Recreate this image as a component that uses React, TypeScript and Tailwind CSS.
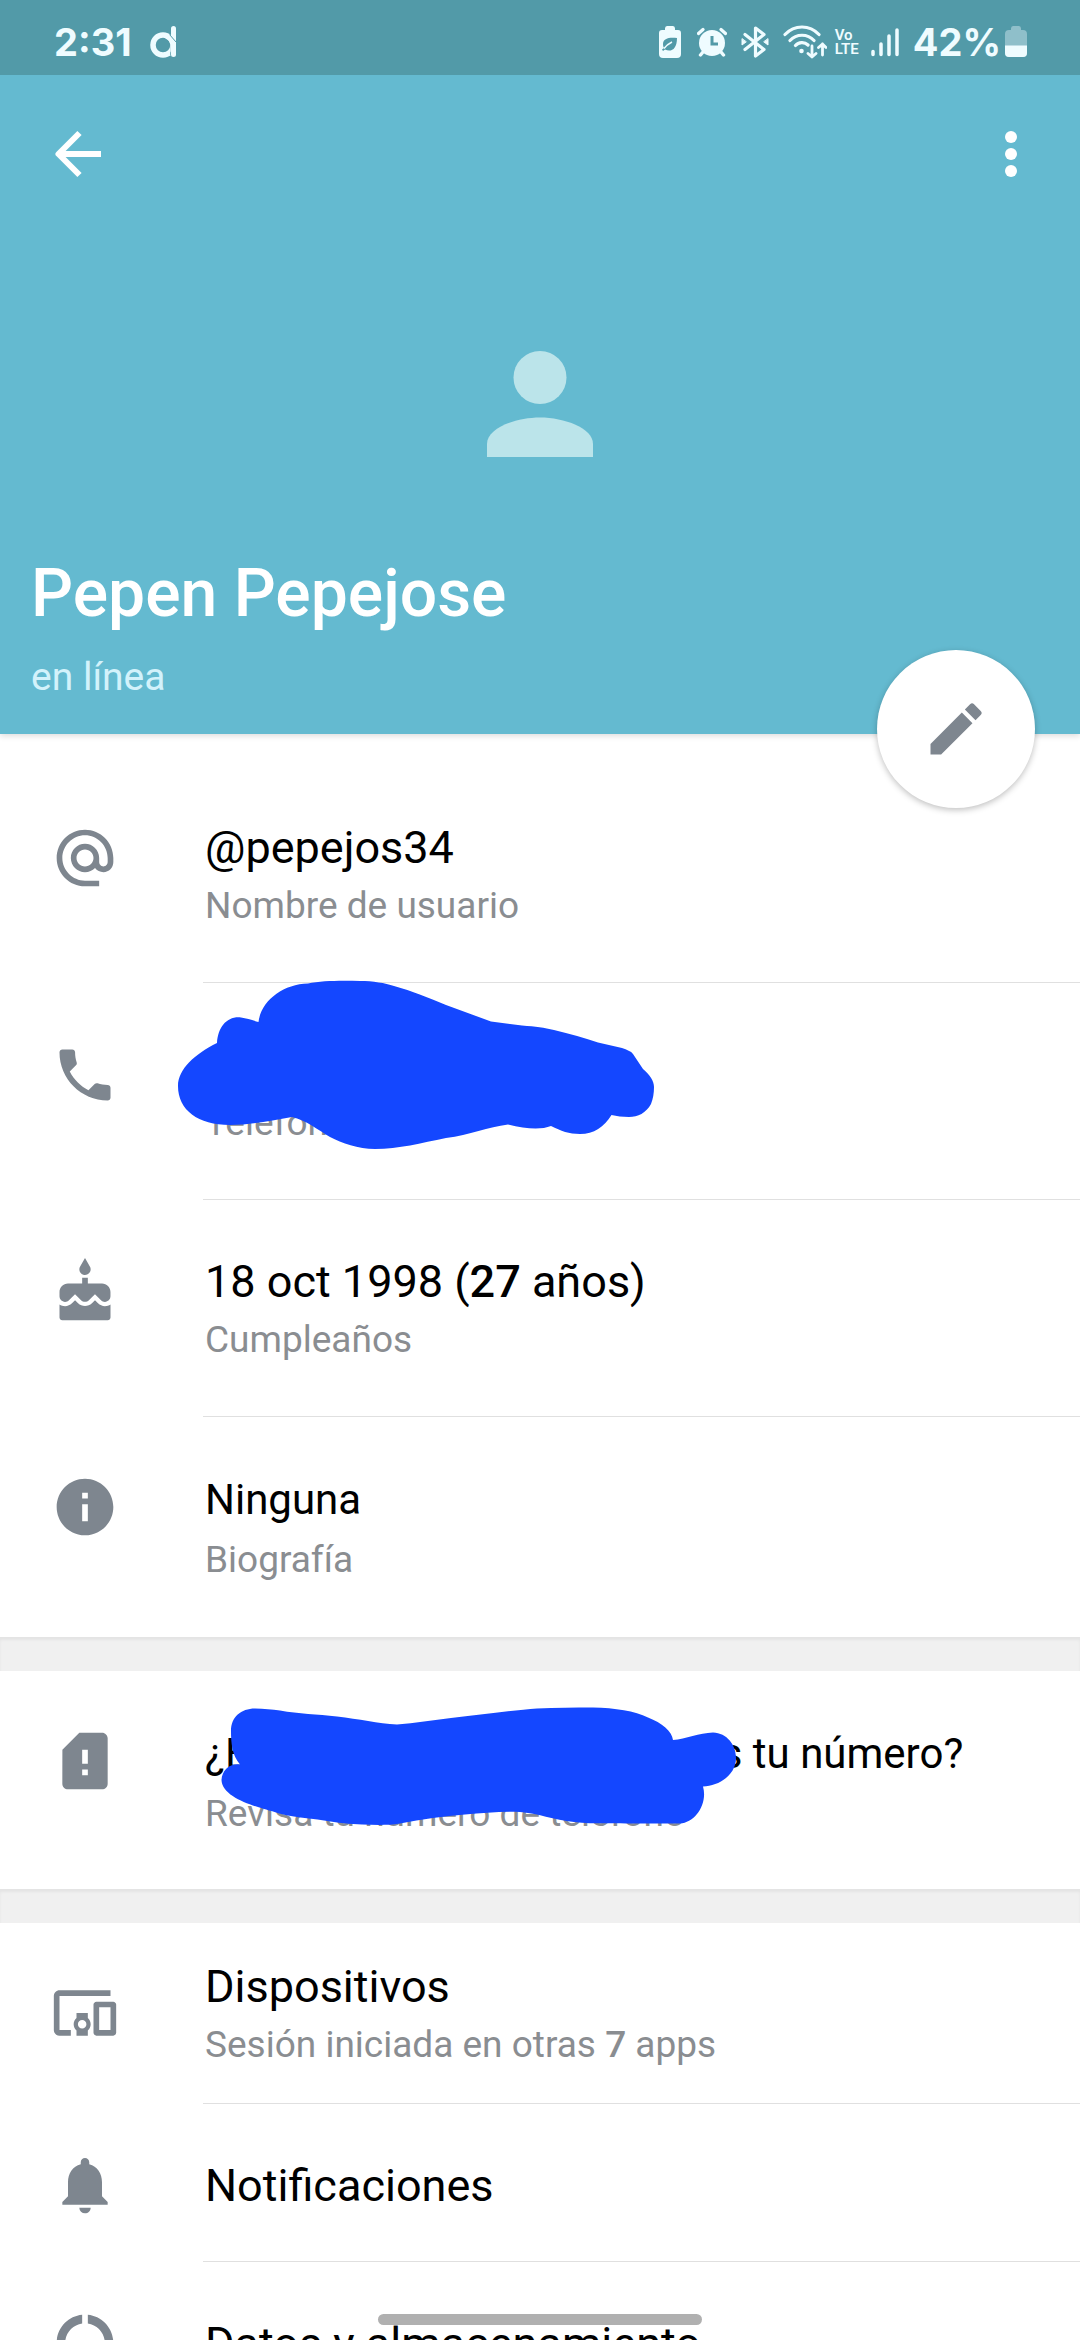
import type { ReactNode } from "react";
import type { IconType } from "react-icons";
import {
  MdAlternateEmail,
  MdCake,
  MdDataUsage,
  MdDevicesOther,
  MdEdit,
  MdInfo,
  MdNotifications,
  MdPhone,
  MdSimCardAlert,
} from "react-icons/md";

function StatusBar() {
  return (
    <div className="flex h-[75px] items-center bg-[#529aa8] pt-2 pr-[53px] pl-[54px] font-[Inter,sans-serif] text-[38px] leading-[48px] font-bold text-[#effcff]">
      <span>2:31</span>
      <svg className="ml-4 h-9 w-8" viewBox="0 0 32 36" fill="none" stroke="currentColor" aria-label="d">
        <circle cx="15" cy="21" r="10" strokeWidth="5.500" />
        <path d="M25.500 4v27" stroke="#529aa8" strokeWidth="6.500" />
        <path d="M19.500 12.500c3 1.500 5 4 5.500 8v6" strokeWidth="5.500" strokeLinecap="round" />
        <path d="M25.500 4.500v26" strokeWidth="5" strokeLinecap="round" />
        <path d="M21.500 10.500 28 18" stroke="#529aa8" strokeWidth="1" />
      </svg>
      <div className="ml-auto flex items-center">
        {/* power saving */}
        <svg className="h-8 w-[22px]" viewBox="0 0 22 32">
          <path
            fill="currentColor"
            d="M6 2.500Q6 0 8 0h6q2 0 2 2.500V4h3q3 0 3 3v21q0 4-4 4H4q-4 0-4-4V7q0-3 3-3h3z"
          />
          <path d="M18 12c-7-1-14 0-14 6 0 2 .5 3 1 4l-2 1.500 1 1.500 2-1.500c6 3 12 0 12-11.500z" fill="#529aa8" />
          <path d="M5 22.500c2-3 4-4.500 8-6.500" stroke="currentColor" strokeWidth="1.500" fill="none" />
        </svg>
        {/* alarm */}
        <svg className="ml-4 h-[30px] w-[30px]" viewBox="0 0 30 30" fill="none" stroke="currentColor" strokeLinecap="round">
          <circle cx="15" cy="16" r="13" fill="currentColor" stroke="none" />
          <path d="M1.500 6.500 6 2.500M28.500 6.500 24 2.500" strokeWidth="3.200" />
          <path d="M6 25l-2.500 3M24 25l2.500 3" strokeWidth="3.400" />
          <path d="M15 9v8h6" stroke="#529aa8" strokeWidth="3" strokeLinecap="butt" />
        </svg>
        {/* bluetooth */}
        <svg className="ml-3.5 h-8 w-7" viewBox="0 0 28 32" fill="none" stroke="currentColor" strokeLinecap="round" strokeLinejoin="round">
          <path d="M4 8.500 23 23.500l-8.500 6.500V2L23 8.500 4 23.500" strokeWidth="3.200" />
          <path d="M1 13v6l4-3zM27 13v6l-4-3z" fill="currentColor" strokeWidth="1" />
        </svg>
        {/* wifi with traffic arrows */}
        <svg className="ml-3.5 h-[34px] w-11" viewBox="0 0 44 34" fill="none" stroke="currentColor" strokeWidth="3.200" strokeLinecap="round" strokeLinejoin="round">
          <path d="M2 9.500c9.500-10 24.500-10 34 0M7 15.500c6.500-7 17.500-7 24 0M12.500 20.500c3-3.500 9-4 12.500-.5" />
          <circle cx="18.500" cy="26" r="2.300" fill="currentColor" stroke="none" />
          <path d="M29 21v11M25 28.500l4 3.500 4-3.500M39.500 30V19M35.500 22.500l4-3.500 3.500 3.500" strokeWidth="2.800" />
        </svg>
        <span className="ml-2 flex flex-col font-[Roboto,sans-serif] text-[15px] leading-[14px] font-semibold">
          <span>Vo</span>
          <span>LTE</span>
        </span>
        {/* signal */}
        <svg className="ml-3 h-[30px] w-7" viewBox="0 0 28 30" fill="none" stroke="currentColor" strokeWidth="3.500" strokeLinecap="round">
          <path d="M2 24.500v3M10 17v10.500M18 9v18.500M26 3v24.500" />
        </svg>
        <span className="ml-3.5">42%</span>
        {/* battery */}
        <svg className="ml-1 h-8 w-[22px]" viewBox="0 0 22 32">
          <path
            fill="#8fbfca"
            d="M6 2.500Q6 0 8 0h6q2 0 2 2.500V4h2q4 0 4 4v19q0 4-4 4H4q-4 0-4-4V8q0-4 4-4h2z"
          />
          <path fill="currentColor" d="M0 19.500h22V27q0 4-4 4H4q-4 0-4-4z" />
        </svg>
      </div>
    </div>
  );
}

function Header() {
  return (
    <header className="relative bg-[#64bad0] shadow-[0_2px_6px_rgba(0,0,0,0.14)]">
      <StatusBar />
      <div className="flex h-[158px] items-center justify-between px-11 text-white">
        <button type="button" aria-label="Atrás">
          <svg className="h-[68px] w-[68px]" viewBox="0 0 68 68" fill="none" stroke="currentColor" strokeWidth="6">
            <path d="M57 34H15M35.500 13 14.500 34l21 21" strokeLinejoin="round" />
          </svg>
        </button>
        <button type="button" aria-label="Más opciones">
          <svg className="h-[68px] w-[50px]" viewBox="0 0 50 68" fill="currentColor">
            <circle cx="25" cy="17" r="6" />
            <circle cx="25" cy="34" r="6" />
            <circle cx="25" cy="51" r="6" />
          </svg>
        </button>
      </div>
      <svg className="mx-auto mt-[118px] block h-[106px] w-[106px] text-[#bbe4ea]" viewBox="0 0 106 106" fill="currentColor">
        <circle cx="53" cy="26.500" r="26.500" />
        <path d="M0 106V93C0 77 29 66.500 53 66.500S106 77 106 93v13z" />
      </svg>
      <div className="mt-[98px] px-[31px] pb-[33px]">
        <h1 className="text-[66px] leading-[78px] font-medium text-white">Pepen Pepejose</h1>
        <p className="mt-5 text-[39px] leading-[48px] text-[#d3f2fb]">en línea</p>
      </div>
      <button
        type="button"
        aria-label="Editar"
        className="absolute right-[45px] -bottom-[74px] z-10 flex h-[158px] w-[158px] items-center justify-center rounded-full bg-white text-[#7e868f] shadow-[0_2px_6px_rgba(0,0,0,0.25)]"
      >
        <MdEdit size={68} />
      </button>
    </header>
  );
}

const rowStyles = {
  detail: {
    icon: "pt-[58px]",
    body: "gap-2.5 pt-14 pb-[54px]",
    title: "text-[45px]",
  },
  wrapped: {
    icon: "pt-14",
    body: "gap-3 pt-[57px] pb-[52px]",
    title: "text-[42px]",
  },
  compact: {
    icon: "pt-14",
    body: "gap-2.5 pt-[38px] pb-9",
    title: "text-[45px]",
  },
  single: {
    icon: "pt-[47px]",
    body: "pt-14 pb-[49px]",
    title: "text-[45px]",
  },
};

type RowProps = {
  icon: IconType;
  title: ReactNode;
  subtitle?: ReactNode;
  variant?: keyof typeof rowStyles;
  last?: boolean;
  children?: ReactNode;
};

function Row({ icon: Icon, title, subtitle, variant = "detail", last, children }: RowProps) {
  const style = rowStyles[variant];
  return (
    <li className="relative">
      <button type="button" className="flex w-full items-start text-left">
        <span className={`flex w-[170px] shrink-0 justify-center text-[#7e868f] ${style.icon}`}>
          <Icon size={68} />
        </span>
        <span
          className={`ml-[33px] flex flex-1 flex-col border-b pl-0.5 ${last ? "border-transparent" : "border-[#e0e0e0]"} ${style.body}`}
        >
          <span className={`min-h-[52px] leading-[52px] whitespace-nowrap text-black ${style.title}`}>{title}</span>
          {subtitle && (
            <span className="text-[37px] leading-[44px] whitespace-nowrap text-[#8a8d91]">{subtitle}</span>
          )}
        </span>
      </button>
      {children}
    </li>
  );
}

function PhoneScribble() {
  return (
    <svg className="pointer-events-none absolute -top-3 left-[170px] z-10 h-[190px] w-[490px]" viewBox="0 0 490 190" fill="#1447ff">
      <path d="M8 115C8 98 25 83 47 72C48 56 57 45 71 46.500C77 47.500 82 49 88.500 51C91 30 113 13 138 12.500C152 9.500 172 9.500 190 10C203 10 215 12 224 15C242 20 259 27 276 34L321 50.500L352 54.500C366 55.500 374 56.500 384 59C400 63 415 67 428 71.500L452 77C457 79 461 80 463 83L473 98C480 104 484 110 484 116C484 122 483 128 481 133C476 142 468 146 459 146C452 146 447 145 441.500 144C434 156 424 163 410 163C399 163 391 160 381 155C371 159 356 158 338 153.500C318 156 300 164 276 167C251 172 229 178 205 178C188 178 172 172 160 166C148 159 136 149 122 146C100 150 80 153.500 60 154C28 154 8 139 8 115Z" />
    </svg>
  );
}

function NumberScribble() {
  return (
    <svg className="pointer-events-none absolute top-8 left-[216px] z-10 h-[126px] w-[526px]" viewBox="0 0 526 126" fill="#1447ff">
      <path d="M15 28C15 14 25 5.500 39 5.500C48 5.500 56 6.500 64 7.500C83 11 101 11 121 13.500C143 16 162 20.500 181 21.500C199 20 217 17 235 15C264 12 298 7 321 5.500C340 4.500 358 4.500 377 4.500C399 5 419 8 432 14.500C446 20 456 28 457 37C470 36 483 30 497 29.500C511 30 520 42 520 55C520 72 503 83 487 83.500C492 101 479 120 464 120.500H410C387 120 374 121 358 119C338 117 321 110 304 109C286 108 268 110 249 111.500C228 113 206 116 184 120.500C172 122.500 159 122 146 121.500C135 121 121 120 108 117.500C91 115 73 114 60 109.500C45 105 6 96 5.500 77C6 67 14 60 24 61.500C16 52 15 40 15 28Z" />
    </svg>
  );
}

function Section({ children, className = "" }: { children: ReactNode; className?: string }) {
  return <ul className={`bg-white ${className}`}>{children}</ul>;
}

function Gap() {
  return <div className="h-[34px] bg-[#f0f0f0] shadow-[inset_0_3px_3px_rgba(0,0,0,0.05)]" />;
}

export default function App() {
  return (
    <div className="relative h-screen overflow-hidden bg-white font-[Roboto,sans-serif]">
      <Header />
      <main>
        <Section className="pt-8 pb-0.5">
          <Row icon={MdAlternateEmail} title="@pepejos34" subtitle="Nombre de usuario" />
          <Row icon={MdPhone} title="" subtitle="Teléfono">
            <PhoneScribble />
          </Row>
          <Row
            icon={MdCake}
            title={
              <>
                18 oct 1998 (<b className="font-medium">27</b> años)
              </>
            }
            subtitle="Cumpleaños"
          />
          <Row icon={MdInfo} title="Ninguna" subtitle="Biografía" variant="wrapped" last />
        </Section>
        <Gap />
        <Section>
          <Row
            icon={MdSimCardAlert}
            title={
              <>
                ¿E
                <span className="inline-block w-[472px]" />s tu número?
              </>
            }
            subtitle="Revisa tu número de teléfono"
            variant="wrapped"
            last
          >
            <NumberScribble />
          </Row>
        </Section>
        <Gap />
        <Section>
          <Row
            icon={MdDevicesOther}
            title="Dispositivos"
            subtitle={
              <>
                Sesión iniciada en otras <b className="font-medium">7</b> apps
              </>
            }
            variant="compact"
          />
          <Row icon={MdNotifications} title="Notificaciones" variant="single" />
          <Row icon={MdDataUsage} title="Datos y almacenamiento" variant="single" last />
        </Section>
      </main>
      <div className="absolute bottom-[15px] left-1/2 z-20 h-[11px] w-[324px] -translate-x-1/2 rounded-full bg-[#b0b0b0]" />
    </div>
  );
}
